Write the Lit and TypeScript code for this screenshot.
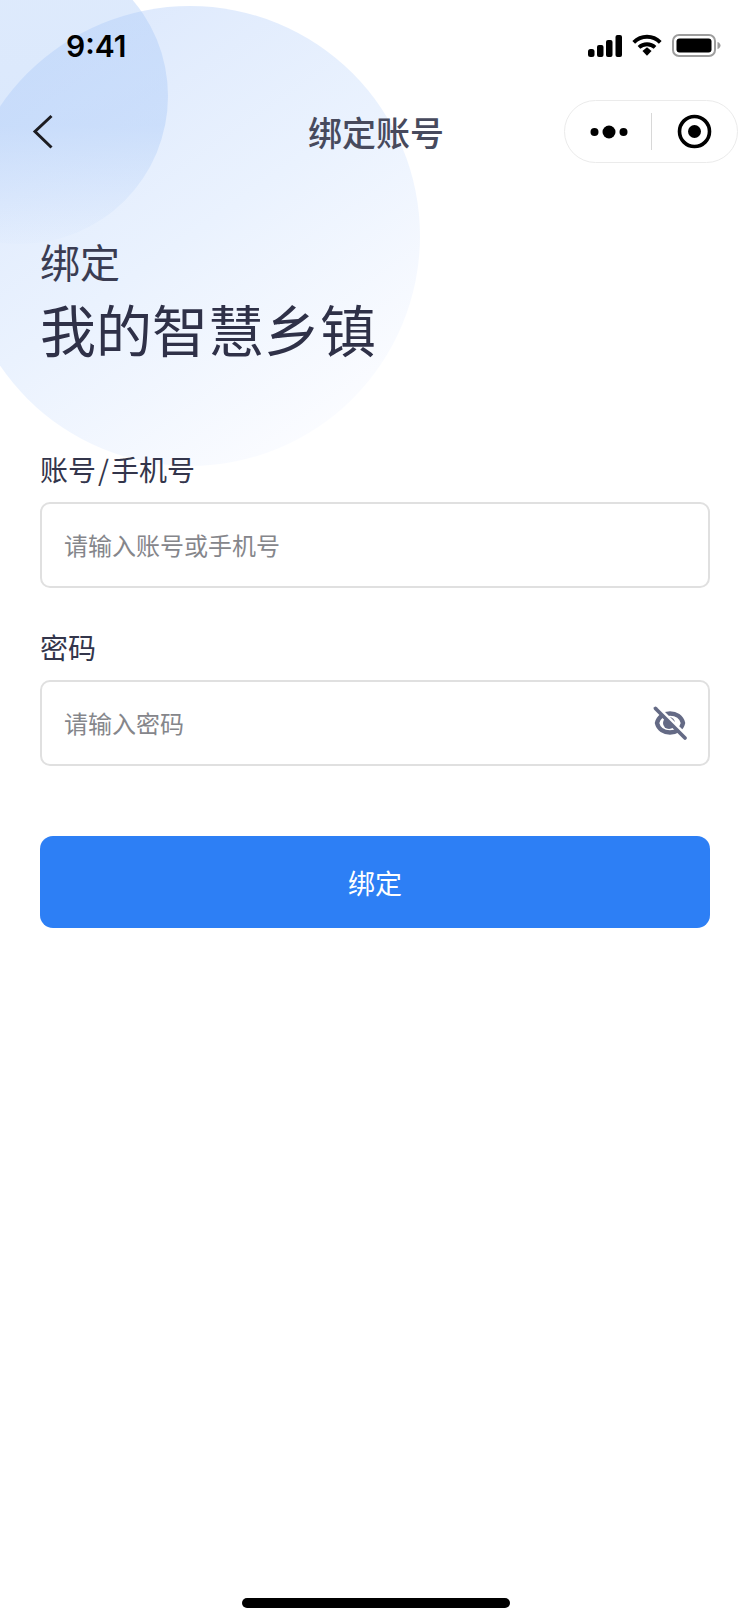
import { LitElement, html, css } from "lit";
import { customElement } from "lit/decorators.js";

@customElement("app-root")
export class AppRoot extends LitElement {
  static styles = css`
    :host {
      display: block;
      width: 750px;
      height: 1624px;
      background: #fff;
      font-family: "Noto Sans CJK SC", "Noto Sans", sans-serif;
      color: #2f3148;
    }
    .page {
      position: relative;
      height: 100%;
      overflow: hidden;
      display: flex;
      flex-direction: column;
    }
    .blob {
      position: absolute;
      border-radius: 50%;
    }
    .blob-large {
      left: -40px;
      top: 6px;
      width: 460px;
      height: 460px;
      background: linear-gradient(145deg, #d9e6fc 0%, #eaf2fe 50%, #fbfcff 88%);
    }
    .blob-small {
      left: -128px;
      top: -52px;
      width: 296px;
      height: 296px;
      background: linear-gradient(180deg, rgba(169, 201, 248, 0.38) 0%, rgba(169, 201, 248, 0.42) 60%, rgba(169, 201, 248, 0.03) 100%);
    }
    .content {
      position: relative;
      flex: 1;
      display: flex;
      flex-direction: column;
    }
    .status {
      height: 92px;
      box-sizing: border-box;
      padding: 27px 29px 0 66px;
      display: flex;
      justify-content: space-between;
      align-items: flex-start;
    }
    .time {
      font-family: Inter, "Liberation Sans", sans-serif;
      font-size: 30px;
      line-height: 38px;
      font-weight: 600;
      color: #000;
    }
    .status-icons {
      display: flex;
      align-items: center;
      gap: 10px;
      padding-top: 7px;
    }
    .nav {
      height: 71px;
      margin-top: 4px;
      padding: 0 12px 0 32px;
      display: grid;
      grid-template-columns: 1fr auto 1fr;
      align-items: center;
    }
    .back {
      display: block;
    }
    .nav-title {
      padding-right: 18px;
      font-size: 34px;
      line-height: 44px;
      color: #474a5d;
      font-weight: 500;
    }
    .capsule {
      justify-self: end;
      width: 174px;
      height: 63px;
      box-sizing: border-box;
      border: 1px solid #ebebeb;
      border-radius: 32px;
      background: rgba(255, 255, 255, 0.9);
      display: flex;
      align-items: center;
    }
    .capsule-side {
      flex: 1;
      display: flex;
      align-items: center;
      justify-content: center;
    }
    .dots {
      margin-left: 2px;
    }
    .capsule-line {
      width: 1px;
      height: 37px;
      background: #d8d8d8;
    }
    .heading {
      padding: 0 40px;
      margin-top: 72px;
    }
    .heading-sub {
      font-size: 40px;
      line-height: 44px;
      color: #3a3c52;
    }
    .heading-main {
      font-size: 56px;
      line-height: 72px;
      margin-top: 9px;
      color: #2f3148;
    }
    .form {
      padding: 0 40px;
      margin-top: 85px;
    }
    .label {
      font-size: 28px;
      line-height: 40px;
      color: #33354b;
    }
    .slash {
      margin: 0 2px;
    }
    .field {
      height: 86px;
      margin-top: 13px;
      box-sizing: border-box;
      border: 2px solid #e0e0e0;
      border-radius: 10px;
      padding: 0 20px 0 22px;
      display: flex;
      align-items: center;
      justify-content: space-between;
      background: #fff;
    }
    .placeholder {
      font-size: 24px;
      line-height: 34px;
      color: #85868b;
    }
    .eye {
      display: block;
    }
    .group + .group {
      margin-top: 39px;
    }
    .submit {
      height: 92px;
      margin-top: 70px;
      border-radius: 13px;
      background: #2d7ff5;
      color: #fff;
      font-size: 27px;
      display: flex;
      align-items: center;
      justify-content: center;
    }
    .home {
      margin: auto 0 16px 242px;
      width: 268px;
      height: 10px;
      border-radius: 5px;
      background: #000;
    }
  `;

  render() {
    return html`
      <div class="page">
        <div class="blob blob-large"></div>
        <div class="blob blob-small"></div>
        <div class="content">
          <div class="status">
            <span class="time">9:41</span>
            <div class="status-icons">
              <svg width="34" height="22" viewBox="0 0 34 22" fill="#000">
                <rect x="0" y="14" width="6.5" height="8" rx="2.5"></rect>
                <rect x="9" y="10" width="6.5" height="12" rx="2"></rect>
                <rect x="18" y="5" width="6.5" height="17" rx="2"></rect>
                <rect x="27.5" y="0" width="6.5" height="22" rx="2"></rect>
              </svg>
              <svg width="30" height="23" viewBox="0 0 31 23" fill="none" stroke="#000">
                <path d="M1.8 8.2 C9.5 0.6 21.5 0.6 29.2 8.2" stroke-width="4"></path>
                <path d="M7.2 13.4 C11.8 9.2 19.2 9.2 23.8 13.4" stroke-width="4"></path>
                <path d="M10.8 17.2 L15.5 13.4 L20.2 17.2 L15.5 22.2 Z" fill="#000" stroke="none"></path>
              </svg>
              <svg width="49" height="23" viewBox="0 0 49 23" fill="none">
                <rect x="1" y="1" width="42" height="21" rx="6" stroke="#9d9d9d" stroke-width="2"></rect>
                <rect x="4.5" y="4.5" width="35" height="14" rx="3" fill="#000"></rect>
                <path d="M45.5 8 C47.5 8.6 48.5 10 48.5 11.5 C48.5 13 47.5 14.4 45.5 15 Z" fill="#9d9d9d"></path>
              </svg>
            </div>
          </div>
          <div class="nav">
            <svg class="back" width="22" height="36" viewBox="0 0 22 36" fill="none" stroke="#1d1d22" stroke-width="3">
              <path d="M19.5 2 L3 17.5 L19.5 33.5"></path>
            </svg>
            <div class="nav-title">绑定账号</div>
            <div class="capsule">
              <div class="capsule-side">
                <svg class="dots" width="38" height="14" viewBox="0 0 38 14" fill="#000">
                  <circle cx="4.5" cy="7" r="4"></circle>
                  <circle cx="19" cy="7" r="6.5"></circle>
                  <circle cx="33.5" cy="7" r="4"></circle>
                </svg>
              </div>
              <div class="capsule-line"></div>
              <div class="capsule-side">
                <svg width="35" height="35" viewBox="0 0 35 35">
                  <circle cx="17.5" cy="17.5" r="15" fill="none" stroke="#000" stroke-width="3.6"></circle>
                  <circle cx="17.5" cy="17.5" r="6.5" fill="#000"></circle>
                </svg>
              </div>
            </div>
          </div>
          <div class="heading">
            <div class="heading-sub">绑定</div>
            <div class="heading-main">我的智慧乡镇</div>
          </div>
          <div class="form">
            <div class="group">
              <div class="label">账号<span class="slash">/</span>手机号</div>
              <div class="field"><span class="placeholder">请输入账号或手机号</span></div>
            </div>
            <div class="group">
              <div class="label">密码</div>
              <div class="field">
                <span class="placeholder">请输入密码</span>
                <svg class="eye" width="36" height="36" viewBox="0 0 36 36" fill="none" stroke="#646a85" stroke-linecap="round" stroke-linejoin="round">
                  <path d="M5 18 C6.5 11.5 12 8.5 18 8.5 C24 8.5 29.5 11.5 31 18 C29.5 24.5 24 27.5 18 27.5 C12 27.5 6.5 24.5 5 18 Z" stroke-width="4.4"></path>
                  <circle cx="17" cy="18" r="6" fill="#646a85" stroke="none"></circle>
                  <path d="M6 2.5 L36 32.5" stroke="#fff" stroke-width="3.5"></path>
                  <path d="M3.5 3.5 L33 33" stroke-width="3.8"></path>
                </svg>
              </div>
            </div>
            <div class="submit">绑定</div>
          </div>
          <div class="home"></div>
        </div>
      </div>
    `;
  }
}
